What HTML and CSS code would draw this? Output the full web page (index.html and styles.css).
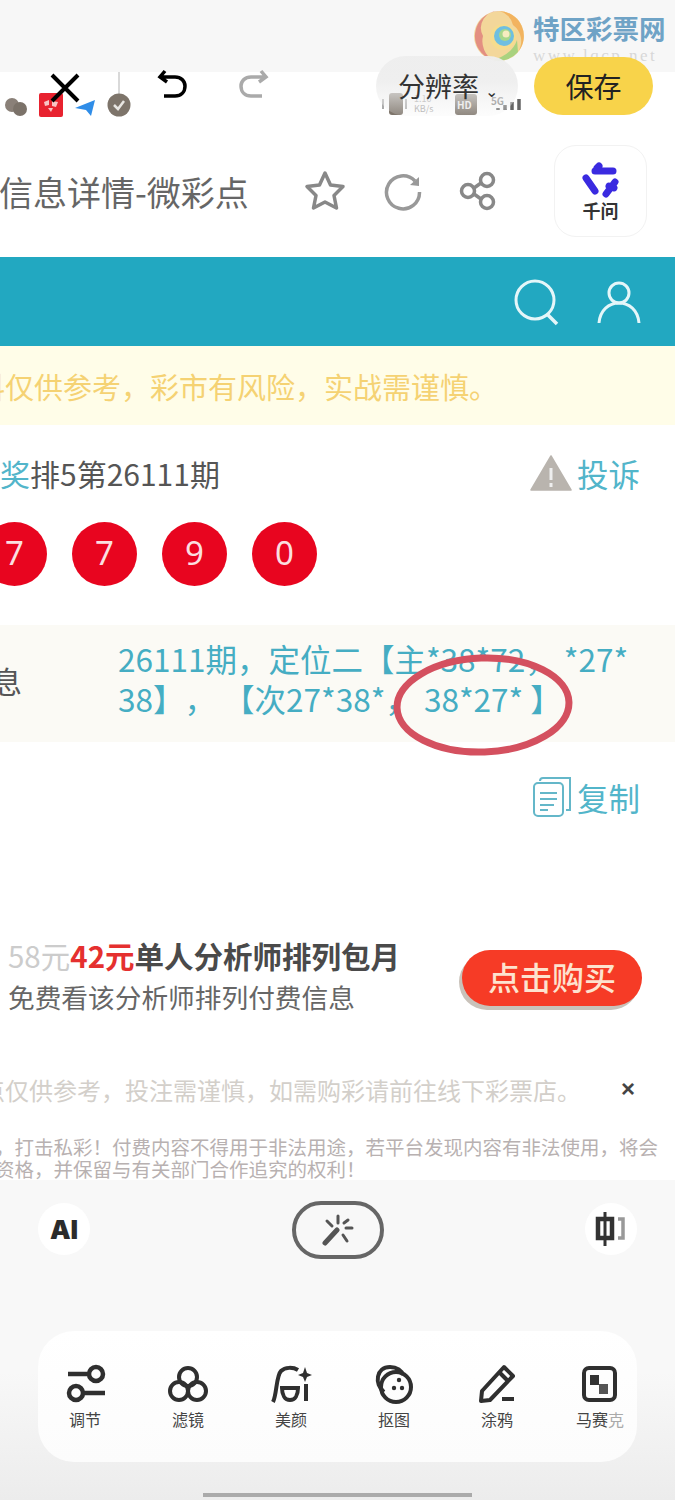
FILE: index.html
```html
<!DOCTYPE html>
<html lang="zh-CN">
<head>
    <meta charset="UTF-8">
    <meta name="viewport" content="width=device-width, initial-scale=1.0">
    <title>信息详情-微彩点</title>
    <link rel="stylesheet" href="styles.css">
</head>
<body>

<div class="page">

    <div class="top-strip"></div>

    <div class="shot">
        <div class="status-row">
            <div class="status-left">
                <svg width="24" height="20" viewBox="0 0 24 20"><circle cx="8" cy="8" r="7" fill="#8a8078"/><circle cx="16" cy="12" r="7" fill="#7b7269"/></svg>
                <div class="app-red">
                    <svg width="24" height="24" viewBox="0 0 24 24"><path d="M5 9 L10 7 L10 12 L6 13 Z M13 8 L19 9 L17 14 L13 13 Z M9 15 L14 15 L12 19 Z" fill="#f8c4c4"/></svg>
                </div>
                <svg width="22" height="18" viewBox="0 0 22 18"><path d="M21 1 L1 9 L12 11 L17 17 Z" fill="#2f8de8"/></svg>
                <svg width="24" height="45" viewBox="0 0 24 45"><path d="M12 0 V22" stroke="#ccc" stroke-width="1.500"/><circle cx="12" cy="33" r="11.500" fill="#7d746a"/><path d="M7 33 L11 37 L17 29" fill="none" stroke="#e8e6e2" stroke-width="2.500"/></svg>
            </div>
            <div class="status-right">
                <svg width="28" height="26" viewBox="0 0 28 26"><rect x="9" y="2" width="14" height="22" rx="3" fill="#7d746a"/><path d="M3 8v10M26 8v10" stroke="#aaa" stroke-width="2"/></svg>
                <span class="speed">1.10<br>KB/s</span>
                <span class="hd">HD</span>
                <span class="net">5G</span>
                <svg width="26" height="14" viewBox="0 0 26 14"><path d="M2 11v2M9 8v5M16 5v8M23 2v11" stroke="#666" stroke-width="3.500"/></svg>
            </div>
        </div>

        <div class="browser-bar">
            <div class="page-title">信息详情-微彩点</div>
            <div class="browser-icons">
                <svg width="44" height="44" viewBox="0 0 44 44"><path d="M22 4 L27.500 16 L40 17.500 L31 26.500 L33.500 39 L22 33 L10.500 39 L13 26.500 L4 17.500 L16.500 16 Z" fill="none" stroke="#888" stroke-width="3.500" stroke-linejoin="round"/></svg>
                <svg width="40" height="40" viewBox="0 0 40 40"><path d="M32 10 A16.500 16.500 0 1 0 36.500 21" fill="none" stroke="#999" stroke-width="3.500"/><path d="M27 14 L36 15 L36 6 Z" fill="#999"/></svg>
                <svg width="40" height="40" viewBox="0 0 40 40"><g fill="none" stroke="#888" stroke-width="3.500"><circle cx="28" cy="9" r="6.500"/><circle cx="9" cy="20" r="6.500"/><circle cx="28" cy="31" r="6.500"/><path d="M15 17 L22 12M15 23 L22 28"/></g></svg>
            </div>
            <div class="qianwen">
                <svg width="38" height="36" viewBox="0 0 38 36"><g fill="none" stroke="#3a2ae0" stroke-width="7" stroke-linecap="round"><path d="M13 9 H31M15 6 L17 4"/><path d="M4 16 L13 29"/><path d="M33 20 L24 32M27 24 L32 26"/></g></svg>
                <span>千问</span>
            </div>
        </div>

        <div class="teal-head">
            <svg width="48" height="48" viewBox="0 0 48 48"><circle cx="22" cy="22" r="19" fill="none" stroke="#e4f6f9" stroke-width="3"/><path d="M34 36 L44 46" stroke="#e4f6f9" stroke-width="3.500"/></svg>
            <svg width="44" height="44" viewBox="0 0 44 44"><g fill="none" stroke="#e4f6f9" stroke-width="3"><circle cx="22" cy="13" r="10"/><path d="M2 43 C3 30 12 23 22 23 C32 23 41 30 42 43"/></g></svg>
        </div>

        <div class="notice">料仅供参考，彩市有风险，实战需谨慎。</div>

        <div class="result-head">
            <div class="result-title"><span class="teal">奖</span>排5第26111期</div>
            <div class="action">
                <svg width="42" height="36" viewBox="0 0 42 36"><path d="M21 1 L41 35 L1 35 Z" fill="#b9b4ae" stroke="#b9b4ae" stroke-width="1.500" stroke-linejoin="round"/><path d="M21 13v12M21 28v4" stroke="#eee" stroke-width="3"/></svg>
                <span>投诉</span>
            </div>
        </div>

        <div class="balls">
            <div class="ball">7</div>
            <div class="ball">7</div>
            <div class="ball">9</div>
            <div class="ball">0</div>
        </div>

        <div class="info">
            <div class="info-label">息</div>
            <div class="info-text">26111期，定位二【主*38*72， *27*<br>38】， 【次27*38*， 38*27* 】</div>
            <svg class="circle-mark" width="190" height="110" viewBox="0 0 190 110"><ellipse cx="95" cy="53" rx="86" ry="47" fill="none" stroke="#d4505f" stroke-width="7" transform="rotate(-2 95 53)"/></svg>
        </div>

        <div class="copy-row">
            <div class="action">
                <svg width="40" height="40" viewBox="0 0 40 40"><g fill="none" stroke="#64b7c9" stroke-width="2"><rect x="2" y="6" width="29" height="33" rx="4"/><path d="M8 4 Q8 1 11 1 H38 V33 H34"/><path d="M8 16 H25M8 22 H25M8 28 H22M8 33 H16"/></g></svg>
                <span>复制</span>
            </div>
        </div>

        <div class="buy-row">
            <div class="buy-text">
                <div class="buy-title"><span class="old-price">58元</span><span class="new-price">42元</span>单人分析师排列包月</div>
                <div class="buy-sub">免费看该分析师排列付费信息</div>
            </div>
            <div class="buy-btn">点击购买</div>
        </div>

        <div class="tips-row">
            <div class="tips">点仅供参考，投注需谨慎，如需购彩请前往线下彩票店。</div>
            <div class="tips-close">×</div>
        </div>

        <div class="fine-print">
            <div class="fine-one">，打击私彩！付费内容不得用于非法用途，若平台发现内容有非法使用，将会</div>
            <div class="fine-two">资格，并保留与有关部门合作追究的权利！</div>
        </div>
    </div>

    <div class="panel">
        <div class="panel-tools">
            <div class="round-btn ai">AI</div>
            <div class="wand-btn">
                <svg width="32" height="32" viewBox="0 0 32 32"><g stroke="#555" stroke-width="3" stroke-linecap="round"><path d="M3 29 L15 16" stroke-width="5"/><path d="M16 2v7M5 7l5 5M24 14h6M21 21l4 6M22 9l4-3"/></g></svg>
            </div>
            <div class="round-btn">
                <svg width="32" height="36" viewBox="0 0 32 36"><path d="M3 8 H17 V27 H3 Z" fill="none" stroke="#333" stroke-width="4.500"/><path d="M10 1 V35" stroke="#333" stroke-width="3"/><path d="M23 8 H28 V27 H23" fill="none" stroke="#999" stroke-width="3.500"/></svg>
            </div>
        </div>

        <div class="tool-card">
            <div class="tool">
                <svg width="44" height="40" viewBox="0 0 44 40"><g fill="none" stroke="#2f2f2f" stroke-width="4.500"><circle cx="33" cy="10" r="7"/><path d="M5 10 H26"/><circle cx="13" cy="29" r="7"/><path d="M20 29 H42"/></g></svg>
                <span>调节</span>
            </div>
            <div class="tool">
                <svg width="44" height="40" viewBox="0 0 44 40"><g fill="none" stroke="#2f2f2f" stroke-width="4"><circle cx="22" cy="13" r="9"/><circle cx="13" cy="27" r="9"/><circle cx="31" cy="27" r="9"/></g></svg>
                <span>滤镜</span>
            </div>
            <div class="tool">
                <svg width="44" height="40" viewBox="0 0 44 40"><g fill="none" stroke="#2f2f2f" stroke-width="4"><path d="M4 38 C8 30 7 12 12 7 C16 3 24 3 29 6"/><path d="M13 24 H29 C29 31 26 36 21 36 C16 36 13 31 13 24 Z"/><path d="M37 20 V37"/></g><path d="M36 3 L38 9 L43 11 L38 13 L36 18 L34 13 L29 11 L34 9 Z" fill="#2f2f2f"/></svg>
                <span>美颜</span>
            </div>
            <div class="tool">
                <svg width="44" height="40" viewBox="0 0 44 40"><g fill="none" stroke="#2f2f2f" stroke-width="4"><path d="M12 28 C2 20 4 3 18 3 C25 3 30 7 31 11"/><circle cx="24" cy="23" r="15"/></g><circle cx="27" cy="16" r="2.200" fill="#2f2f2f"/><circle cx="22" cy="24" r="2.200" fill="#2f2f2f"/><circle cx="30" cy="24" r="2.200" fill="#2f2f2f"/></svg>
                <span>抠图</span>
            </div>
            <div class="tool">
                <svg width="44" height="40" viewBox="0 0 44 40"><g fill="none" stroke="#2f2f2f" stroke-width="4" stroke-linejoin="round"><path d="M6 37 L7 27 L29 3 L38 12 L15 36 Z"/><path d="M24 8 L33 17"/></g><path d="M27 35 H39" stroke="#2f2f2f" stroke-width="4"/></svg>
                <span>涂鸦</span>
            </div>
            <div class="tool">
                <svg width="44" height="40" viewBox="0 0 44 40"><rect x="6" y="4" width="31" height="32" rx="5" fill="none" stroke="#2f2f2f" stroke-width="4"/><rect x="12" y="11" width="9" height="10" fill="#333"/><rect x="21" y="20" width="9" height="10" fill="#555"/></svg>
                <span>马赛<span class="fade">克</span></span>
            </div>
        </div>

        <div class="home-bar"></div>
    </div>

    <!-- watermark and the edit bar sit on top of the screenshot -->
    <div class="watermark">
        <svg width="52" height="52" viewBox="0 0 52 52">
            <circle cx="26" cy="26" r="25" fill="#f3d79a"/>
            <path d="M26 1 A25 25 0 0 0 20 50 A22 22 0 0 1 10 26 A17 17 0 0 1 26 1 Z" fill="#e38f82"/>
            <path d="M26 1 A25 25 0 0 1 45 42 A20 20 0 0 0 40 15 A18 18 0 0 0 26 1 Z" fill="#f2b35f"/>
            <path d="M45 42 A25 25 0 0 1 20 50 C30 47 40 42 44 30 Z" fill="#a9d27f"/>
            <circle cx="30" cy="27" r="13" fill="#f6dc8e"/>
            <circle cx="31" cy="26" r="10" fill="#6fbfe0"/>
            <circle cx="32" cy="25" r="6" fill="#a7d88c"/>
            <circle cx="33" cy="24" r="3.500" fill="#f7ecc0"/>
        </svg>
        <div class="mark-text">
            <div class="mark-name">特区彩票网</div>
            <div class="mark-url">www.lqcp.net</div>
        </div>
    </div>

    <div class="edit-bar">
        <svg class="edit-close" width="32" height="32" viewBox="0 0 32 32"><path d="M3 3 L29 29M29 3 L3 29" stroke="#000" stroke-width="4"/></svg>
        <svg class="edit-undo" width="30" height="32" viewBox="0 0 30 32"><path d="M8 2 L3 8 L10 13M4 8 H18 C24 8 28 12 28 17 C28 23 24 27 18 27 H7" fill="none" stroke="#000" stroke-width="3.500"/></svg>
        <svg class="edit-redo" width="30" height="32" viewBox="0 0 30 32"><path d="M22 2 L27 8 L20 13M26 8 H12 C6 8 2 12 2 17 C2 23 6 27 12 27 H23" fill="none" stroke="#aaa" stroke-width="3.500"/></svg>
        <div class="res-pill">分辨率<span class="res-arrow">⌄</span></div>
        <div class="save-btn">保存</div>
    </div>

</div>

</body>
</html>
```

FILE: styles.css
```css
* {
    box-sizing: border-box;
}
body {
    margin: 0;
    font-family: "Noto Sans CJK SC", "Noto Sans", sans-serif;
    background: #f7f7f7;
    text-spacing-trim: space-all;
}
.page {
    position: relative;
    width: 675px;
    height: 1500px;
    overflow: hidden;
}
.top-strip {
    height: 72px;
    background: #f7f7f7;
}
.shot {
    height: 1108px;
    background: #fff;
    overflow: hidden;
}

/* phone status row */
.status-row {
    height: 73px;
    display: flex;
    justify-content: space-between;
    align-items: flex-end;
    padding: 0 153px 28px 4px;
}
.status-left {
    display: flex;
    align-items: flex-end;
    gap: 11px;
}
.app-red {
    width: 24px;
    height: 24px;
    background: #e8222f;
    border-radius: 2px;
}
.app-red svg {
    display: block;
}
.status-right {
    display: flex;
    align-items: center;
    gap: 6px;
}
.speed {
    font-size: 9px;
    line-height: 10px;
    color: #aaa;
    width: 28px;
}
.hd {
    width: 22px;
    margin-left: 7px;
    background: #7d746a;
    color: #eee;
    font-size: 10px;
    font-weight: 700;
    padding: 3px 2px;
    border-radius: 3px;
}
.net {
    font-size: 10px;
    color: #777;
    font-weight: 700;
    margin: 0 -14px 8px 8px;
}

/* browser bar */
.browser-bar {
    height: 112px;
    display: flex;
    align-items: center;
    padding: 0 28px 20px 0;
}
.page-title {
    font-size: 34px;
    color: #666;
    white-space: nowrap;
    width: 304px;
    margin-left: -1px;
}
.browser-icons {
    display: flex;
    align-items: center;
    gap: 36px;
}
.qianwen {
    width: 93px;
    height: 92px;
    border: 1px solid #f2f2f2;
    border-radius: 22px;
    display: flex;
    flex-direction: column;
    align-items: center;
    padding-top: 16px;
    margin-left: auto;
}
.qianwen span {
    font-size: 18px;
    line-height: 24px;
    font-weight: 700;
    color: #333;
}

.teal-head {
    height: 89px;
    background: #22a8c1;
    display: flex;
    justify-content: flex-end;
    align-items: center;
    gap: 36px;
    padding-right: 34px;
}
.notice {
    height: 79px;
    background: #fffde8;
    color: #f5d273;
    font-size: 29px;
    line-height: 80px;
    text-indent: -24px;
    white-space: nowrap;
    overflow: hidden;
}

.result-head {
    height: 97px;
    display: flex;
    justify-content: space-between;
    align-items: center;
    padding: 0 35px 2px 0;
}
.result-title {
    font-size: 30px;
    color: #555;
}
.teal {
    color: #52b5ca;
}
.action {
    display: flex;
    align-items: center;
    gap: 5px;
    font-size: 31.500px;
    color: #52b5ca;
}

.balls {
    display: flex;
    gap: 25px;
    margin-left: -18px;
    height: 64px;
}
.ball {
    width: 65px;
    height: 64px;
    border-radius: 50%;
    background: #e8051f;
    color: #fbdfe0;
    font-size: 33px;
    line-height: 62px;
    text-align: center;
    font-family: "Noto Sans", sans-serif;
}

.info {
    position: relative;
    height: 117px;
    margin-top: 39px;
    background: #fbfaf5;
    display: flex;
    align-items: center;
}
.info-label {
    width: 118px;
    margin-left: -8px;
    font-size: 30px;
    color: #555;
    margin-top: -8px;
}
.info-text {
    margin: -12px 0 0 8px;
    font-size: 31.500px;
    line-height: 40px;
    color: #45adc3;
    white-space: nowrap;
}
.circle-mark {
    position: absolute;
    left: 388px;
    top: 27px;
}

.copy-row {
    height: 208px;
    display: flex;
    justify-content: flex-end;
    padding: 32px 35px 0 0;
}
.copy-row .action {
    align-self: flex-start;
}

.buy-row {
    height: 112px;
    display: flex;
    justify-content: space-between;
    padding: 0 33px 0 8px;
}
.buy-text {
    margin-top: -16px;
}
.buy-title {
    font-size: 29.500px;
    line-height: 42px;
    font-weight: 700;
    color: #4a4a4a;
    white-space: nowrap;
}
.old-price {
    color: #ccc;
    font-weight: 400;
}
.new-price {
    color: #e5302f;
}
.buy-sub {
    font-size: 26.700px;
    line-height: 42px;
    color: #666;
    white-space: nowrap;
}
.buy-btn {
    width: 180px;
    height: 56px;
    border-radius: 28px;
    background: #f63b26;
    box-shadow: -3px 4px 0 #c9c2ba;
    color: #fde3cf;
    font-size: 32px;
    font-weight: 500;
    line-height: 52px;
    text-align: center;
}

.tips-row {
    height: 46px;
    margin-top: 4px;
    display: flex;
    justify-content: space-between;
    align-items: center;
    padding-right: 40px;
}
.tips {
    font-size: 24px;
    color: #d3cfca;
    margin-left: -19px;
    white-space: nowrap;
}
.tips-close {
    font-family: "Liberation Sans", sans-serif;
    font-weight: 700;
    font-size: 24px;
    line-height: 24px;
    color: #444;
}

.fine-print {
    margin-top: 24px;
    font-size: 19.500px;
    line-height: 22px;
    white-space: nowrap;
    color: #b8b1b1;
}
.fine-one {
    margin-left: -5px;
}
.fine-two {
    margin-left: -5px;
}

/* bottom edit panel */
.panel {
    height: 320px;
    background: linear-gradient(#f8f8f8 60%, #ececec);
}
.panel-tools {
    height: 151px;
    display: flex;
    justify-content: space-between;
    align-items: flex-start;
    padding: 23px 38px 0;
}
.round-btn {
    width: 52px;
    height: 52px;
    border-radius: 50%;
    background: #fff;
    display: flex;
    align-items: center;
    justify-content: center;
}
.ai {
    font-family: Inter, sans-serif;
    font-weight: 900;
    font-size: 26px;
    color: #2b2b2b;
}
.wand-btn {
    width: 92px;
    height: 58px;
    margin-top: -2px;
    border: 4px solid #666;
    border-radius: 29px;
    display: flex;
    align-items: center;
    justify-content: center;
}
.tool-card {
    width: 599px;
    height: 131px;
    margin-left: 38px;
    background: linear-gradient(#fff, #fcfcfc);
    border-radius: 36px;
    display: flex;
    justify-content: space-between;
    padding: 33px 11px 0 21px;
}
.tool {
    width: 52px;
    display: flex;
    flex-direction: column;
    align-items: center;
    font-size: 16px;
    line-height: 24px;
    color: #444;
    white-space: nowrap;
}
.tool span {
    margin-top: 3px;
}
.tool .fade {
    margin-top: 0;
    color: #aaa;
}
.home-bar {
    width: 269px;
    height: 4px;
    margin: 31px 0 0 203px;
    background: #aaa;
}

/* overlays */
.watermark {
    position: absolute;
    top: 10px;
    left: 473px;
    display: flex;
    gap: 8px;
}
.mark-name {
    font-size: 26.500px;
    line-height: 36px;
    font-weight: 700;
    color: #6fa3c6;
    white-space: nowrap;
}
.mark-url {
    font-family: "Liberation Serif", serif;
    font-size: 17px;
    line-height: 20px;
    letter-spacing: 2.500px;
    color: #d8d8d8;
    white-space: nowrap;
}
.edit-bar {
    position: absolute;
    top: 56px;
    left: 0;
    width: 675px;
    height: 60px;
    display: flex;
    align-items: center;
}
.edit-close {
    margin-left: 49px;
    margin-top: 3px;
}
.edit-undo {
    margin-left: 76px;
    margin-top: -2px;
}
.edit-redo {
    margin-left: 52px;
    margin-top: -2px;
}
.res-pill {
    width: 142px;
    height: 60px;
    margin-left: 107px;
    border-radius: 30px;
    background: linear-gradient(rgba(238, 238, 238, 0.95) 40%, rgba(238, 238, 238, 0.15));
    font-size: 27px;
    line-height: 60px;
    color: #333;
    padding-left: 22px;
    white-space: nowrap;
}
.res-arrow {
    font-size: 16px;
    margin-left: 6px;
}
.save-btn {
    width: 119px;
    height: 58px;
    margin-left: 16px;
    border-radius: 29px;
    background: #f8d34a;
    font-size: 28px;
    line-height: 58px;
    text-align: center;
    color: #222;
}
```
